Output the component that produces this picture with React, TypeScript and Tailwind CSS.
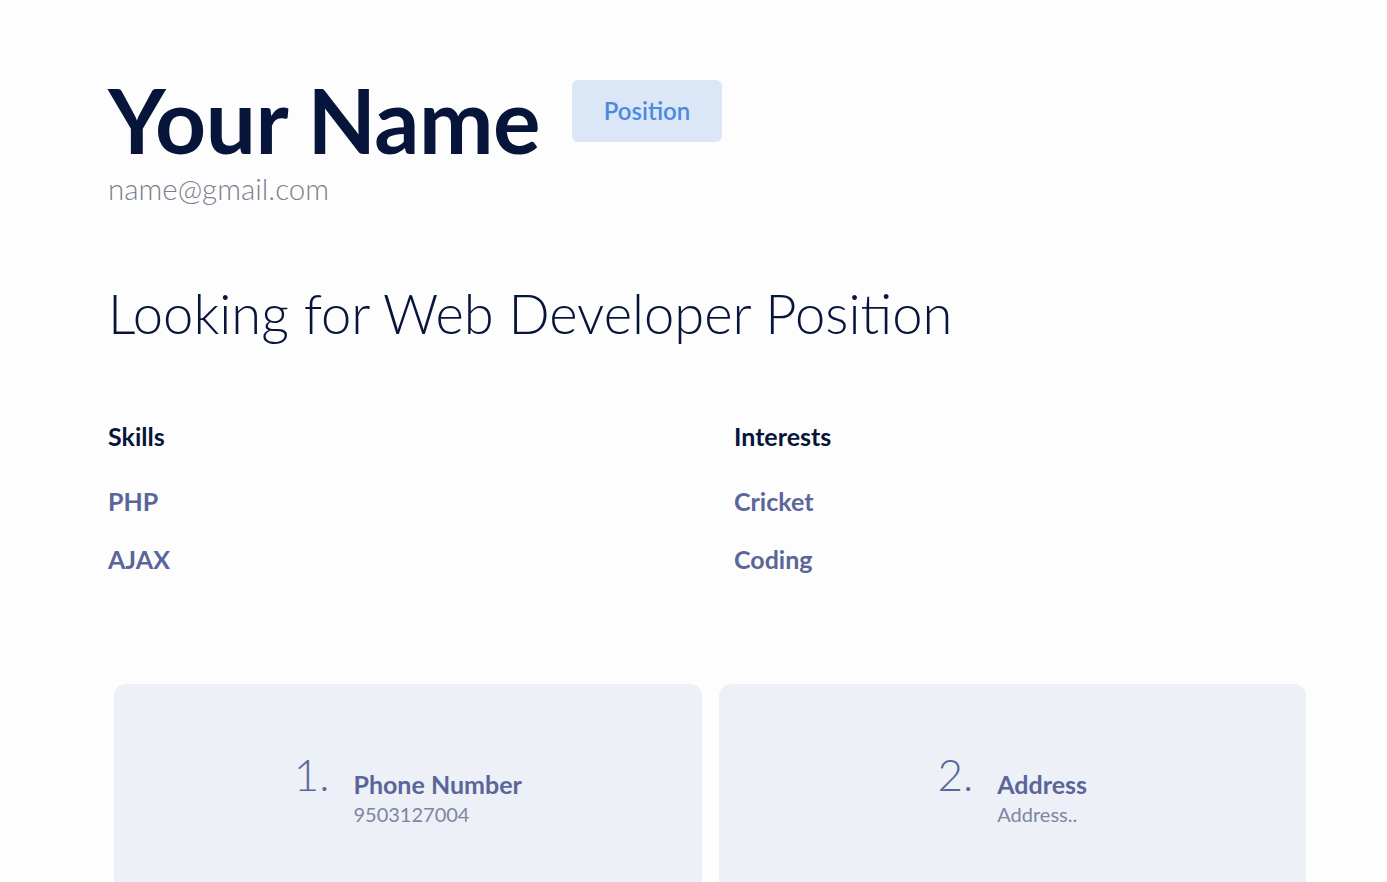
import React from 'react';

const skills = ['PHP', 'AJAX'];
const interests = ['Cricket', 'Coding'];

const contacts = [
  { n: '1.', title: 'Phone Number', value: '9503127004' },
  { n: '2.', title: 'Address', value: 'Address..' },
];

const App: React.FC = () => {
  return (
    <div className="min-h-screen w-full bg-[#fdfdfe] font-['Lato','Noto_Sans',sans-serif] overflow-hidden">
      <div className="pl-[108px] pr-[27px] pt-[70px]">
        <div className="flex items-start">
          <h1 className="text-[89px] leading-[100px] font-bold text-[#061539] tracking-[-0.5px]">Your Name</h1>
          <span className="ml-[32px] mt-[10px] w-[150px] h-[62px] rounded-md bg-[#dbe7f7] text-[#4a8ae0] text-[24px] font-semibold flex items-center justify-center">
            Position
          </span>
        </div>
        <p className="text-[29.5px] font-light text-[#7a7f8c] leading-[32px] mt-[3px]">name@gmail.com</p>

        <h2 className="mt-[68px] text-[54.3px] font-light text-[#061539] leading-[80px]">Looking for Web Developer Position</h2>

        <div className="mt-[67px] grid grid-cols-[626px_1fr]">
          <div>
            <h3 className="text-[25px] font-bold text-[#061539] leading-[32px]">Skills</h3>
            <ul className="mt-[33px] flex flex-col gap-[26px]">
              {skills.map(s => (
                <li key={s} className="text-[25px] font-bold text-[#5a6699] leading-[32px]">{s}</li>
              ))}
            </ul>
          </div>
          <div>
            <h3 className="text-[25px] font-bold text-[#061539] leading-[32px]">Interests</h3>
            <ul className="mt-[33px] flex flex-col gap-[26px]">
              {interests.map(s => (
                <li key={s} className="text-[25px] font-bold text-[#5a6699] leading-[32px]">{s}</li>
              ))}
            </ul>
          </div>
        </div>

        <div className="mt-[109px] ml-[6px] w-[1192px] grid grid-cols-2 gap-[17px]">
          {contacts.map(c => (
            <div key={c.n} className="h-[240px] rounded-xl bg-[#edf0f7] flex justify-center pt-[65px]">
              <div className="flex items-start gap-[24px]">
                <span className="text-[44px] font-light text-[#5a6699] leading-[50px]">{c.n}</span>
                <div className="pt-[20px]">
                  <div className="text-[25px] font-bold text-[#5a6699] leading-[30px]">{c.title}</div>
                  <div className="text-[20px] text-[#7e86a0] leading-[24px] mt-[3px]">{c.value}</div>
                </div>
              </div>
            </div>
          ))}
        </div>
      </div>
    </div>
  );
};

export default App;
